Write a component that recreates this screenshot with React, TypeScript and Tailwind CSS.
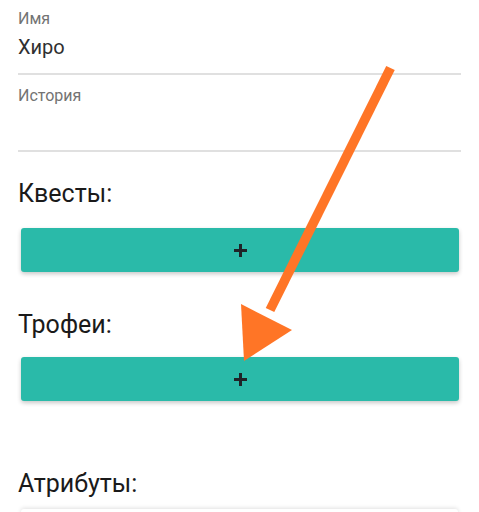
import React from "react";

const font = { fontFamily: "Roboto, 'Noto Sans', sans-serif" };

const AddButton = () => (
  <button className="mx-[3px] h-[44px] w-[438px] rounded-[3px] bg-[#2abaa9] shadow-[0_2px_4px_rgba(0,0,0,0.22)] flex items-center justify-center">
    <svg width="15" height="15" viewBox="0 0 15 15">
      <path d="M7.5 1v13M1 7.5h13" stroke="#1f2327" strokeWidth="3" />
    </svg>
  </button>
);

const App = () => {
  return (
    <div className="relative w-[479px] h-[512px] overflow-hidden bg-white" style={font}>
      <div className="px-[18px] pt-[10px]">
        {/* Name field */}
        <div className="text-[16px] leading-[18px] text-[#737373]">Имя</div>
        <div className="mt-[5px] text-[20px] leading-[28px] text-[#303030]">Хиро</div>
        <div className="mt-[12px] h-[2px] bg-[#e0e0e0]" />

        {/* Story field */}
        <div className="mt-[12px] text-[16px] leading-[18px] text-[#737373]">История</div>
        <div className="mt-[45px] h-[2px] bg-[#e0e0e0]" />

        <h2 className="mt-[27px] text-[25px] leading-[30px] text-[#1a1a1a]">Квесты:</h2>
        <div className="mt-[19px]">
          <AddButton />
        </div>

        <h2 className="mt-[38px] text-[25px] leading-[30px] text-[#1a1a1a]">Трофеи:</h2>
        <div className="mt-[17px]">
          <AddButton />
        </div>

        <h2 className="mt-[68px] text-[25px] leading-[30px] text-[#1a1a1a]">Атрибуты:</h2>
        <div className="mt-[10px] mx-[3px] h-[20px] rounded-[3px] bg-white shadow-[0_-1px_4px_rgba(0,0,0,0.12)]" />
      </div>

      {/* annotation arrow */}
      <svg className="absolute inset-0 pointer-events-none" width="479" height="512" viewBox="0 0 479 512">
        <line x1="390.5" y1="68" x2="270" y2="310" stroke="#ff7526" strokeWidth="9.5" />
        <polygon points="241,304 292,330 244,361" fill="#ff7526" />
      </svg>
    </div>
  );
};

export default App;
